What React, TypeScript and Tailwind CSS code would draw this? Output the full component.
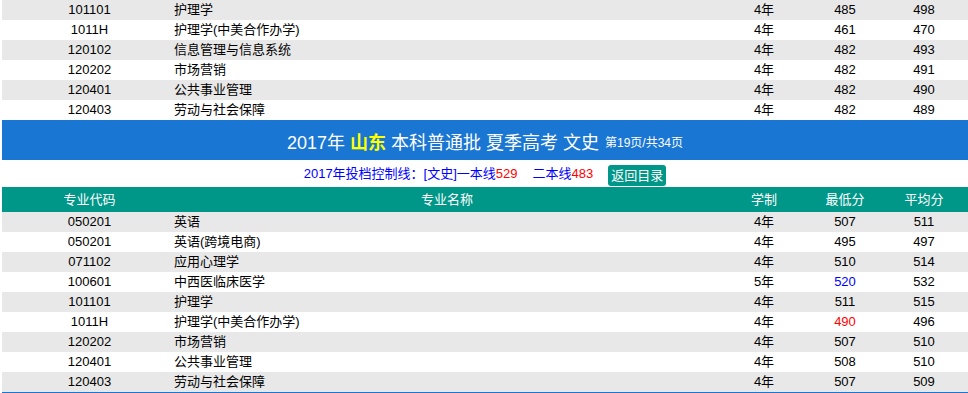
import React from 'react';

type Row = {
  code: string;
  name: string;
  years: string;
  min: string;
  avg: string;
  minColor?: string;
};

const prevRows: Row[] = [
  { code: '101101', name: '护理学', years: '4年', min: '485', avg: '498' },
  { code: '1011H', name: '护理学(中美合作办学)', years: '4年', min: '461', avg: '470' },
  { code: '120102', name: '信息管理与信息系统', years: '4年', min: '482', avg: '493' },
  { code: '120202', name: '市场营销', years: '4年', min: '482', avg: '491' },
  { code: '120401', name: '公共事业管理', years: '4年', min: '482', avg: '490' },
  { code: '120403', name: '劳动与社会保障', years: '4年', min: '482', avg: '489' },
];

const rows: Row[] = [
  { code: '050201', name: '英语', years: '4年', min: '507', avg: '511' },
  { code: '050201', name: '英语(跨境电商)', years: '4年', min: '495', avg: '497' },
  { code: '071102', name: '应用心理学', years: '4年', min: '510', avg: '514' },
  { code: '100601', name: '中西医临床医学', years: '5年', min: '520', avg: '532', minColor: 'text-[#0000ff]' },
  { code: '101101', name: '护理学', years: '4年', min: '511', avg: '515' },
  { code: '1011H', name: '护理学(中美合作办学)', years: '4年', min: '490', avg: '496', minColor: 'text-[#ff0000]' },
  { code: '120202', name: '市场营销', years: '4年', min: '507', avg: '510' },
  { code: '120401', name: '公共事业管理', years: '4年', min: '508', avg: '510' },
  { code: '120403', name: '劳动与社会保障', years: '4年', min: '507', avg: '509' },
];

function DataRows({ data }: { data: Row[] }) {
  return (
    <>
      {data.map((r, i) => (
        <div
          key={i}
          className={`flex h-[20px] leading-[20px] text-[13px] text-black ${i % 2 === 0 ? 'bg-[#e8e8e8]' : 'bg-white'}`}
        >
          <div className="w-[170px] shrink-0 pl-[5px] text-center">{r.code}</div>
          <div className="w-[550px] shrink-0 pl-[2px]">{r.name}</div>
          <div className="w-[84px] shrink-0 text-center">{r.years}</div>
          <div className={`w-[78px] shrink-0 text-center ${r.minColor ?? ''}`}>{r.min}</div>
          <div className="flex-1 pr-[4px] text-center">{r.avg}</div>
        </div>
      ))}
    </>
  );
}

export default function App() {
  return (
    <div
      className="h-[393px] w-[968px] overflow-hidden bg-white pl-[2px]"
      style={{ fontFamily: '"Liberation Sans", Arial, "Noto Sans CJK SC", sans-serif' }}
    >
      <DataRows data={prevRows} />

      {/* Section title */}
      <div className="flex h-[40px] items-center justify-center bg-[#1976d2] pt-[6px] text-white">
        <span className="text-[18px]">
          2017年 <b className="text-[#ffff00]">山东</b> 本科普通批 夏季高考 文史
        </span>
        <span className="ml-[6px] text-[12px]">第19页/共34页</span>
      </div>

      {/* Control line */}
      <div className="flex h-[27px] items-center justify-center text-[13px] text-[#0000ff]">
        <span>
          2017年投档控制线：[文史]一本线<span className="text-[#ff0000]">529</span>
        </span>
        <span className="ml-[15px]">
          二本线<span className="text-[#ff0000]">483</span>
        </span>
        <button className="ml-[15px] mt-[4px] h-[21px] rounded-[3px] bg-[#009688] px-[3px] text-[13px] leading-[21px] text-white">
          返回目录
        </button>
      </div>

      {/* Table header */}
      <div className="flex h-[25px] items-center bg-[#009688] text-[13px] text-white">
        <div className="w-[170px] shrink-0 pl-[5px] text-center">专业代码</div>
        <div className="w-[550px] shrink-0 text-center">专业名称</div>
        <div className="w-[84px] shrink-0 text-center">学制</div>
        <div className="w-[78px] shrink-0 text-center">最低分</div>
        <div className="flex-1 pr-[4px] text-center">平均分</div>
      </div>

      <DataRows data={rows} />

      <div className="h-[40px] bg-[#1976d2]" />
    </div>
  );
}
